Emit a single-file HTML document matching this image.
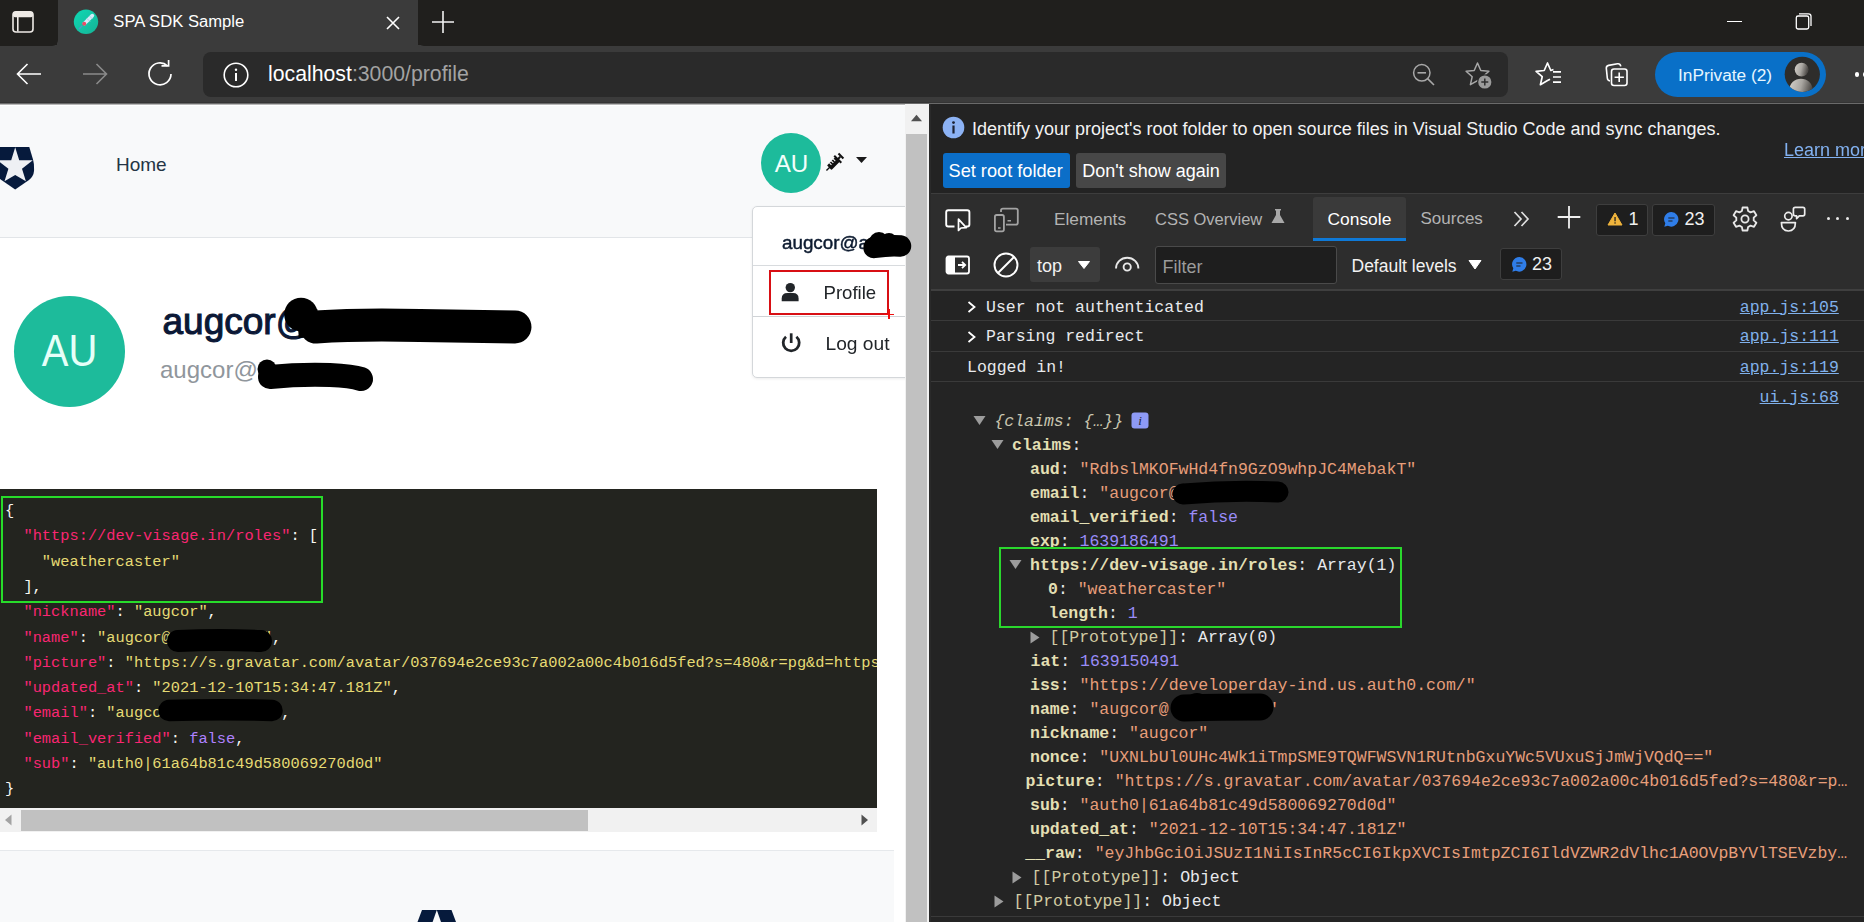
<!DOCTYPE html>
<html><head><meta charset="utf-8">
<style>
*{margin:0;padding:0;box-sizing:border-box}
html,body{width:1864px;height:922px;overflow:hidden;background:#fff;font-family:"Liberation Sans",sans-serif}
.a{position:absolute}
.mono{font-family:"Liberation Mono",monospace}
.k{color:#f92672}.s{color:#e6db74}.f{color:#ae81ff}
/* chrome */
#tabstrip{left:0;top:0;width:1864px;height:46px;background:#201f1d}
#tab{left:57px;top:0;width:361px;height:46px;background:#3b3b3b;border-radius:0 0 0 0}
#toolbar{left:0;top:45px;width:1864px;height:58px;background:#3b3b3b}
#sep{left:0;top:102px;width:1864px;height:1px;background:#343434}
#addr{left:203px;top:52px;width:1305px;height:45px;background:#2a2a2a;border-radius:8px}
/* page */
#page{left:0;top:104px;width:905px;height:818px;background:#fff;overflow:hidden}
#vscroll{left:905px;top:104px;width:24px;height:818px;background:#f1f1f1}
#divider{left:929px;top:104px;width:2px;height:818px;background:#494949}
/* devtools */
#dt{left:931px;top:104px;width:933px;height:818px;background:#242424;overflow:hidden}
</style></head>
<body>

<div id="tabstrip" class="a"></div>
<div id="toolbar" class="a"></div>
<!-- tab with rounded cutouts -->
<div class="a" style="left:57px;top:0;width:361px;height:46px;background:#3b3b3b"></div>
<div class="a" style="left:0;top:0;width:58px;height:46px;background:#201f1d;border-radius:0 0 6px 0"></div>
<div class="a" style="left:418px;top:0;width:1446px;height:46px;background:#201f1d;border-radius:0 0 0 6px"></div>
<!-- tab actions icon -->
<svg class="a" style="left:10px;top:9px" width="26" height="26" viewBox="0 0 26 26">
<rect x="3" y="2.8" width="20" height="20.2" rx="3" fill="none" stroke="#eeeae6" stroke-width="1.6"/>
<rect x="3" y="2.8" width="20" height="5.5" rx="2" fill="#eeeae6"/>
<line x1="7.8" y1="8" x2="7.8" y2="22.5" stroke="#eeeae6" stroke-width="1.6"/>
</svg>
<!-- favicon -->
<svg class="a" style="left:73px;top:9px" width="26" height="26" viewBox="0 0 26 26">
<defs><linearGradient id="fvg" x1="0" y1="0" x2="1" y2="1"><stop offset="0" stop-color="#0ed8b4"/><stop offset="1" stop-color="#16b396"/></linearGradient></defs>
<circle cx="13" cy="12.8" r="12.2" fill="url(#fvg)"/>
<path d="M11.5 14.5 L19.3 6.7" stroke="#d4ecf8" stroke-width="3.8" stroke-linecap="round"/>
<path d="M14 9.5 L17 12.5 M16.5 7 L19.5 10" stroke="#a9c8e6" stroke-width="0.9"/>
<circle cx="11.2" cy="14.8" r="2" fill="#ea4c68"/>
<path d="M5.8 20.2 L9.2 16.8" stroke="#4aa0c8" stroke-width="1.4"/>
</svg>
<div class="a" style="left:113.3px;top:10.1px;font-size:16.65px;color:#fff;line-height:24px">SPA SDK Sample</div>
<!-- close x -->
<svg class="a" style="left:383px;top:13px" width="20" height="20" viewBox="0 0 20 20">
<path d="M4 4 L16 16 M16 4 L4 16" stroke="#fff" stroke-width="1.6"/>
</svg>
<!-- new tab + -->
<svg class="a" style="left:430px;top:9px" width="26" height="26" viewBox="0 0 26 26">
<path d="M13 2 V24 M2 13 H24" stroke="#f2f2f2" stroke-width="1.6"/>
</svg>
<!-- window controls -->
<div class="a" style="left:1727px;top:21px;width:15px;height:1.4px;background:#fff"></div>
<svg class="a" style="left:1793px;top:11px" width="22" height="22" viewBox="0 0 22 22">
<rect x="3.3" y="5" width="12.4" height="13" rx="1.8" fill="none" stroke="#fff" stroke-width="1.3"/>
<path d="M6 2.8 H15.5 Q18 2.8 18 5.3 V15" fill="none" stroke="#fff" stroke-width="1.3"/>
</svg>
<!-- back -->
<svg class="a" style="left:14px;top:61px" width="30" height="26" viewBox="0 0 30 26">
<path d="M27 13 H4 M13.5 3 L3.5 13 L13.5 23" fill="none" stroke="#fff" stroke-width="1.6"/>
</svg>
<!-- forward -->
<svg class="a" style="left:80px;top:61px" width="30" height="26" viewBox="0 0 30 26">
<path d="M3 13 H26 M16.5 3 L26.5 13 L16.5 23" fill="none" stroke="#8a8a8a" stroke-width="1.6"/>
</svg>
<!-- refresh -->
<svg class="a" style="left:146px;top:60px" width="30" height="28" viewBox="0 0 30 28">
<path d="M25 14 A11 11 0 1 1 21.5 5.8" fill="none" stroke="#fff" stroke-width="1.7"/>
<path d="M15.5 5.8 H22.6 V0" fill="none" stroke="#fff" stroke-width="1.7"/>
</svg>
<div id="addr" class="a"></div>
<!-- info icon -->
<svg class="a" style="left:222px;top:61px" width="28" height="28" viewBox="0 0 28 28">
<circle cx="14" cy="14" r="11.8" fill="none" stroke="#fff" stroke-width="1.6"/>
<rect x="13" y="12" width="2" height="8" fill="#fff"/><circle cx="14" cy="8.7" r="1.2" fill="#fff"/>
</svg>
<div class="a" style="left:268px;top:60.7px;font-size:21.25px;line-height:26px;color:#fff;white-space:nowrap">localhost<span style="color:#a3a3a3">:3000/profile</span></div>
<!-- zoom out -->
<svg class="a" style="left:1410px;top:61px" width="28" height="28" viewBox="0 0 28 28">
<circle cx="11.8" cy="11.8" r="8.2" fill="none" stroke="#a8a8a8" stroke-width="1.5"/>
<path d="M7.5 11.8 H16" stroke="#a8a8a8" stroke-width="1.6"/>
<path d="M17.6 17.6 L24 24" stroke="#a8a8a8" stroke-width="1.6"/>
</svg>
<!-- star add -->
<svg class="a" style="left:1463px;top:59px" width="32" height="32" viewBox="0 0 32 32">
<path d="M14.5 4 L17.8 11.5 L25.9 12.3 L19.8 17.7 L21.6 25.7 L14.5 21.6 L7.4 25.7 L9.2 17.7 L3.1 12.3 L11.2 11.5 Z" fill="none" stroke="#a8a8a8" stroke-width="1.5" stroke-linejoin="round"/>
<circle cx="21.8" cy="23" r="7.8" fill="#2a2a2a"/>
<circle cx="21.8" cy="23" r="6.6" fill="#9b9b9b"/>
<path d="M21.8 19.5 V26.5 M18.3 23 H25.3" stroke="#2f2f2f" stroke-width="1.5"/>
</svg>
<!-- favorites -->
<svg class="a" style="left:1534px;top:59px" width="32" height="32" viewBox="0 0 32 32">
<path d="M19.5 10.5 L16.8 11.5 L13.5 4 L10.2 11.5 L2.1 12.3 L8.2 17.7 L6.4 25.7 L13.5 21.6 L16 20.2" fill="none" stroke="#fff" stroke-width="1.7" stroke-linejoin="round"/>
<path d="M19 12.8 H27 M19 18 H27 M19 23.2 H27" stroke="#fff" stroke-width="1.7"/>
</svg>
<!-- collections -->
<svg class="a" style="left:1603px;top:60px" width="32" height="32" viewBox="0 0 32 32">
<path d="M7 21 Q4.5 20.5 4.3 18 L3.3 8.2 Q3.2 5.8 5.6 5.4 L14.5 3.8 Q17.2 3.4 17.8 6.3" fill="none" stroke="#fff" stroke-width="1.6"/>
<rect x="8.5" y="9" width="15.5" height="16.5" rx="2.5" fill="none" stroke="#fff" stroke-width="1.6"/>
<path d="M16.2 12.5 V22 M11.6 17.2 H20.9" stroke="#fff" stroke-width="1.6"/>
</svg>
<!-- inprivate pill -->
<div class="a" style="left:1655px;top:52px;width:171px;height:45px;border-radius:23px;background:#0970c8"></div>
<div class="a" style="left:1678px;top:63.2px;font-size:17.3px;line-height:24px;color:#e6f6ff;white-space:nowrap">InPrivate (2)</div>
<svg class="a" style="left:1784px;top:56px" width="37" height="37" viewBox="0 0 37 37">
<defs><clipPath id="avc"><circle cx="18.3" cy="18.3" r="17.6"/></clipPath>
<linearGradient id="avg" x1="0" y1="0" x2="1" y2="0.25"><stop offset="0" stop-color="#d6d2cc"/><stop offset="0.55" stop-color="#a9a6a1"/><stop offset="1" stop-color="#4e4b48"/></linearGradient></defs>
<circle cx="18.3" cy="18.3" r="17.6" fill="#2e2d2b"/>
<g clip-path="url(#avc)"><circle cx="17.6" cy="13.6" r="6.9" fill="url(#avg)"/><ellipse cx="17" cy="33.5" rx="11.5" ry="10.8" fill="url(#avg)"/></g>
</svg>
<div class="a" style="left:1854.8px;top:72.3px;width:4.4px;height:4.4px;border-radius:50%;background:#fff"></div><div class="a" style="left:1862.8px;top:72.3px;width:4.4px;height:4.4px;border-radius:50%;background:#fff"></div>
<div id="sep" class="a"></div><div class="a" style="left:0;top:103px;width:1864px;height:1px;background:#6a6a6a"></div>

<div id="page" class="a">
<!-- navbar -->
<div class="a" style="left:0;top:0;width:905px;height:1px;background:#b8b8b8"></div><div class="a" style="left:0;top:2px;width:905px;height:132px;background:#f8f9fa;border-bottom:1px solid #e2e5e8"></div>
<svg class="a" style="left:-10px;top:40px" width="50" height="50" viewBox="-10 144 50 50">
<path d="M-4 146.9 H29.3 L33 159.5 Q34.3 164 34 171 Q33.5 176.5 29 180 L15.2 189.6 L1.4 180 Q-3.1 176.5 -3.6 171 Z" fill="#061a3c"/>
<path d="M15.2 147.2 L19.2 160.3 L32.8 160.3 L22 168.8 L25.9 181.3 L15.2 175.1 L4.5 181.3 L8.4 168.8 L-2.4 160.3 L11.2 160.3 Z" fill="#eef0f4"/>
</svg>
<div class="a" style="left:116px;top:49px;font-size:19px;line-height:24px;color:#243444">Home</div>
<!-- small avatar -->
<div class="a" style="left:760.5px;top:29px;width:60px;height:60px;border-radius:50%;background:#1dbb9b"></div>
<div class="a" style="left:774.5px;top:47.2px;width:34px;font-size:24.2px;line-height:26px;color:#f2fffb;text-align:center">AU</div>
<!-- syringe -->
<svg class="a" style="left:822px;top:147px;position:fixed" width="28" height="28" viewBox="0 0 28 28">
<g transform="rotate(-45 14 14)" fill="#111">
<rect x="0.5" y="13.3" width="5" height="1.4"/>
<path d="M4.5 11.3 Q4.5 10.8 5.5 10.8 H16 V17.2 H5.5 Q4.5 17.2 4.5 16.7 Z"/>
<rect x="16" y="13" width="4" height="2"/>
<rect x="15.5" y="9" width="2" height="10"/>
<rect x="20" y="10.5" width="2" height="7"/>
<rect x="7.5" y="10.5" width="1.1" height="3" fill="#f8f9fa"/><rect x="10.2" y="10.5" width="1.1" height="3" fill="#f8f9fa"/><rect x="12.9" y="10.5" width="1.1" height="3" fill="#f8f9fa"/>
</g></svg>
<svg class="a" style="left:855px;top:52px" width="13" height="8" viewBox="0 0 13 8"><path d="M1 1 H12 L6.5 7 Z" fill="#1a1a1a"/></svg>
<!-- profile header -->
<div class="a" style="left:14px;top:191.5px;width:111px;height:111px;border-radius:50%;background:#1dbb9b"></div>
<div class="a" style="left:14px;top:223.8px;width:111px;text-align:center;font-size:43.5px;line-height:46px;color:#e6fff8;transform:scaleX(0.92)">AU</div>
<div class="a" style="left:162.5px;top:195.5px;font-size:37px;line-height:44px;color:#0b1836;-webkit-text-stroke:1.1px #0b1836;white-space:nowrap">augcor@</div>
<div class="a" style="left:160px;top:251px;font-size:24px;line-height:30px;color:#90969c;white-space:nowrap">augcor@a</div>
<!-- scribbles -->
<svg class="a" style="left:240px;top:170px;position:fixed" width="320" height="240" viewBox="240 170 320 240">
<path d="M316 327 Q360 324 420 325.5 Q480 326.5 515 327" fill="none" stroke="#000" stroke-width="33" stroke-linecap="round"/>
<circle cx="301" cy="314.5" r="16.8" fill="#000"/>
<path d="M298 324 L318 323" stroke="#000" stroke-width="28"/>
<path d="M270 377 Q300 374 330 375 Q352 376 361 379" fill="none" stroke="#000" stroke-width="24" stroke-linecap="round"/>
<circle cx="267" cy="369" r="9.5" fill="#000"/>
</svg>
<!-- dropdown -->
<div class="a" style="left:752px;top:101.5px;width:170px;height:172px;background:#fff;border:1px solid #d4d7da;border-radius:5px;box-shadow:0 1px 3px rgba(0,0,0,0.08)"></div>
<div class="a" style="left:782px;top:127px;font-size:18.8px;line-height:24px;color:#0d1b30;-webkit-text-stroke:0.45px #0d1b30;white-space:nowrap">augcor@a</div>

<div class="a" style="left:753px;top:160.5px;width:152px;height:1px;background:#d8dbde"></div>
<div class="a" style="left:753px;top:211.5px;width:152px;height:1px;background:#d0d3d6"></div>
<svg class="a" style="left:780px;top:281px;position:fixed" width="20" height="22" viewBox="0 0 20 22">
<circle cx="10.3" cy="6.6" r="4.7" fill="#212529"/>
<path d="M1.7 20.3 V17.5 Q1.7 12 7.5 12 H13 Q18.6 12 18.6 17.5 V20.3 Z" fill="#212529"/>
</svg>
<div class="a" style="left:823.5px;top:176.5px;font-size:18.6px;line-height:24px;color:#212529">Profile</div>
<svg class="a" style="left:780px;top:331px;position:fixed" width="22" height="22" viewBox="0 0 22 22">
<path d="M6 5.8 A8 8 0 1 0 16.4 5.8" fill="none" stroke="#212529" stroke-width="2.8"/>
<path d="M11.2 2.3 V12" stroke="#212529" stroke-width="2.7"/>
</svg>
<div class="a" style="left:825.5px;top:227.5px;font-size:19.2px;line-height:24px;color:#212529">Log out</div>
<div class="a" style="left:768.5px;top:166px;width:120px;height:44.5px;border:2px solid #d80f14"></div>
<div class="a" style="left:884px;top:209.5px;width:10px;height:1.6px;background:#f01010"></div>
<div class="a" style="left:888.2px;top:205px;width:1.6px;height:10px;background:#f01010"></div>
<!-- page vscroll -->
<!-- code block -->
<div class="a" style="left:0;top:384.5px;width:877px;height:319.2px;background:#23241f"></div>
<pre class="a mono" style="left:5px;top:395.2px;font-size:15.35px;line-height:25.27px;color:#f8f8f2;white-space:pre">{
  <span class="k">"https://dev-visage.in/roles"</span>: [
    <span class="s">"weathercaster"</span>
  ],
  <span class="k">"nickname"</span>: <span class="s">"augcor"</span>,
  <span class="k">"name"</span>: <span class="s">"augcor@          "</span>,
  <span class="k">"picture"</span>: <span class="s">"https://s.gravatar.com/avatar/037694e2ce93c7a002a00c4b016d5fed?s=480&amp;r=pg&amp;d=https%3A%2F%2Fcdn"</span>,
  <span class="k">"updated_at"</span>: <span class="s">"2021-12-10T15:34:47.181Z"</span>,
  <span class="k">"email"</span>: <span class="s">"augcor@          "</span>,
  <span class="k">"email_verified"</span>: <span class="f">false</span>,
  <span class="k">"sub"</span>: <span class="s">"auth0|61a64b81c49d580069270d0d"</span>
}</pre>
<div class="a" style="left:877px;top:384.5px;width:28px;height:450px;background:#fff"></div>
<!-- green box -->
<div class="a" style="left:0.5px;top:392px;width:322.5px;height:106.5px;border:2.3px solid #27dc2a"></div>
<svg class="a" style="left:150px;top:515px" width="150" height="110" viewBox="150 619 150 110"><path d="M178 641 Q220 639 261 641" fill="none" stroke="#000" stroke-width="22" stroke-linecap="round"/><path d="M169 710.5 Q220 709 272 710.5" fill="none" stroke="#000" stroke-width="21.5" stroke-linecap="round"/></svg>
<!-- h scrollbar -->
<div class="a" style="left:0;top:704px;width:877px;height:24px;background:#f1f1f1"></div>
<div class="a" style="left:21px;top:705.5px;width:567px;height:21px;background:#c1c1c1"></div>
<svg class="a" style="left:4px;top:710px" width="8" height="12" viewBox="0 0 8 12"><path d="M7.5 0.5 V11.5 L1 6 Z" fill="#a3a3a3"/></svg>
<svg class="a" style="left:861px;top:710px" width="8" height="12" viewBox="0 0 8 12"><path d="M0.5 0.5 V11.5 L7 6 Z" fill="#505050"/></svg>
<!-- footer -->
<div class="a" style="left:0;top:745.5px;width:894px;height:100px;background:#f8f9fa;border-top:1.5px solid #e6e9ec"></div>
<svg class="a" style="left:400px;top:804px" width="70" height="20" viewBox="400 908 70 20"><path d="M422 910 H451.5 L456 922 H417.5 Z" fill="#061a3c"/><path d="M436.8 910 L441 922 H432.6 Z" fill="#f8f9fa"/></svg>
</div>

<div id="vscroll" class="a"></div>
<svg class="a" style="left:910px;top:114px" width="13" height="8" viewBox="0 0 13 8"><path d="M1 7.3 L6.5 0.8 L12 7.3 Z" fill="#505050"/></svg>
<div class="a" style="left:906px;top:134px;width:21px;height:788px;background:#c1c1c1"></div>
<svg class="a" style="left:850px;top:220px;position:fixed" width="70" height="50" viewBox="850 220 70 50">
<path d="M874 247.5 Q890 245 900.5 246" fill="none" stroke="#000" stroke-width="21.5" stroke-linecap="round"/><circle cx="879" cy="242" r="10" fill="#000"/><circle cx="889" cy="241" r="8" fill="#000"/>
</svg>
<!--DT-->
<div class="a" style="left:930px;top:104px;width:934px;height:818px;background:#242424"></div>
<div class="a" style="left:929px;top:104px;width:1.5px;height:818px;background:#2a2a2a"></div>
<div class="a" style="left:930.5px;top:104px;width:934px;height:89px;background:#232323"></div>
<div class="a" style="left:930.5px;top:193px;width:934px;height:96px;background:#2d2d2d;border-top:1.5px solid #3d3d3d"></div>
<div class="a" style="left:930.5px;top:289px;width:934px;height:1.5px;background:#3f3f3f"></div>
<svg class="a" style="left:942px;top:116px" width="23" height="23" viewBox="0 0 23 23"><circle cx="11.5" cy="11.5" r="10.8" fill="#8cb2f4"/><rect x="10.4" y="9.5" width="2.2" height="8" fill="#1d2233"/><circle cx="11.5" cy="6.6" r="1.4" fill="#1d2233"/></svg>
<div class="a" style="left:972px;top:116.96px;font-size:18px;line-height:24px;color:#f2f2f2;white-space:nowrap">Identify your project's root folder to open source files in Visual Studio Code and sync changes.</div>
<div class="a" style="left:1784px;top:137.56px;font-size:18px;line-height:24px;color:#82b1f0;white-space:nowrap;text-decoration:underline">Learn more</div>
<div class="a" style="left:943px;top:152.5px;width:127px;height:35.5px;background:#0b6ec8;border-radius:3px"></div>
<div class="a" style="left:948.5px;top:158.69px;font-size:18.2px;line-height:24px;color:#fff;white-space:nowrap">Set root folder</div>
<div class="a" style="left:1076.3px;top:152.5px;width:149.5px;height:35.5px;background:#474747;border-radius:3px"></div>
<div class="a" style="left:1082.3px;top:158.76px;font-size:18px;line-height:24px;color:#fff;white-space:nowrap">Don't show again</div>
<svg class="a" style="left:944px;top:207px" width="28" height="26" viewBox="0 0 28 26">
<path d="M10.5 19.5 H4.3 Q2.2 19.5 2.2 17.4 V5.3 Q2.2 3.2 4.3 3.2 H23.3 Q25.4 3.2 25.4 5.3 V17.4 Q25.4 19.5 23.3 19.5 H22" fill="none" stroke="#fff" stroke-width="1.9"/>
<path d="M14.5 12.2 V23.5 L17 21 L22.3 20.6 Z" fill="#2c2c2c" stroke="#fff" stroke-width="1.7" stroke-linejoin="round"/>
</svg>
<svg class="a" style="left:992px;top:206px" width="28" height="28" viewBox="0 0 28 28">
<path d="M9 6 V4.6 Q9 2.7 10.9 2.7 H23.9 Q25.8 2.7 25.8 4.6 V16.7 Q25.8 18.6 23.9 18.6 H14" fill="none" stroke="#a3a3a3" stroke-width="1.8"/>
<rect x="2.9" y="9" width="9" height="16.3" rx="1.8" fill="none" stroke="#a3a3a3" stroke-width="1.8"/>
<path d="M6 22 H8.6 M15.5 14.8 H19" stroke="#a3a3a3" stroke-width="1.5"/>
</svg>
<div class="a" style="left:1313px;top:197px;width:93px;height:43px;background:#3a3a3a;border-radius:3px 3px 0 0"></div>
<div class="a" style="left:1313px;top:238px;width:93px;height:2.5px;background:#0f7ad8"></div>
<div class="a" style="left:1054px;top:207.01px;font-size:17.3px;line-height:24px;color:#b3b3b3;white-space:nowrap">Elements</div>
<div class="a" style="left:1155px;top:207.28px;font-size:16.5px;line-height:24px;color:#b3b3b3;white-space:nowrap">CSS Overview</div>
<svg class="a" style="left:1270px;top:208px" width="16" height="16" viewBox="0 0 16 16"><path d="M5 1 H11 V2.5 H10 V7 L14.5 15 H1.5 L6 7 V2.5 H5 Z" fill="#a8a8a8"/></svg>
<div class="a" style="left:1327.5px;top:206.97px;font-size:17.4px;line-height:24px;color:#ffffff;white-space:nowrap">Console</div>
<div class="a" style="left:1420.5px;top:207.11px;font-size:17px;line-height:24px;color:#b3b3b3;white-space:nowrap">Sources</div>
<svg class="a" style="left:1511px;top:209px" width="22" height="20" viewBox="0 0 22 20"><path d="M3.5 3 L10 10 L3.5 17 M10.5 3 L17 10 L10.5 17" fill="none" stroke="#e0e0e0" stroke-width="1.7"/></svg>
<svg class="a" style="left:1556px;top:204px" width="26" height="26" viewBox="0 0 26 26"><path d="M13 2 V24.5 M1.7 13 H24.3" stroke="#f0f0f0" stroke-width="1.8"/></svg>
<div class="a" style="left:1596.3px;top:203.5px;width:52px;height:32px;background:#1e1e1e;border:1px solid #3e3e3e;border-radius:3px"></div>
<svg class="a" style="left:1607px;top:212px" width="16" height="14" viewBox="0 0 16 14"><path d="M8 1 L15 13 H1 Z" fill="#f0b43c" stroke="#f0b43c" stroke-width="1" stroke-linejoin="round"/><rect x="7.4" y="5" width="1.3" height="4.3" fill="#1e1e1e"/><rect x="7.4" y="10.3" width="1.3" height="1.3" fill="#1e1e1e"/></svg>
<div class="a" style="left:1628.5px;top:207.26px;font-size:18px;line-height:24px;color:#f0f0f0;white-space:nowrap">1</div>
<div class="a" style="left:1652px;top:203.5px;width:62.5px;height:32px;background:#1e1e1e;border:1px solid #3e3e3e;border-radius:3px"></div>
<svg class="a" style="left:1663px;top:211px" width="17" height="17" viewBox="0 0 17 17"><path d="M8.5 1 A7.3 7.3 0 1 1 4.8 14.8 L1.3 15.8 L2.3 12.3 A7.3 7.3 0 0 1 8.5 1 Z" fill="#2f7de8"/><path d="M5.3 7 H11.5 M5.3 10 H9.5" stroke="#1e1e1e" stroke-width="1.2"/></svg>
<div class="a" style="left:1684.5px;top:207.26px;font-size:18px;line-height:24px;color:#f0f0f0;white-space:nowrap">23</div>
<svg class="a" style="left:1731px;top:205px" width="28" height="28" viewBox="0 0 28 28">
<path d="M11.6 2.5 H16.4 L17.1 6 L19.6 7.4 L23 6.2 L25.4 10.3 L22.7 12.6 V15.4 L25.4 17.7 L23 21.8 L19.6 20.6 L17.1 22 L16.4 25.5 H11.6 L10.9 22 L8.4 20.6 L5 21.8 L2.6 17.7 L5.3 15.4 V12.6 L2.6 10.3 L5 6.2 L8.4 7.4 L10.9 6 Z" fill="none" stroke="#e8e8e8" stroke-width="1.8" stroke-linejoin="round"/>
<circle cx="14" cy="14" r="3.6" fill="none" stroke="#e8e8e8" stroke-width="1.8"/></svg>
<svg class="a" style="left:1779px;top:205px" width="28" height="28" viewBox="0 0 28 28">
<circle cx="9.4" cy="11.1" r="3.7" fill="none" stroke="#ececec" stroke-width="1.7"/>
<path d="M2.4 17.6 H16.4 Q16.4 26 9.4 26 Q2.4 26 2.4 17.6 Z" fill="none" stroke="#ececec" stroke-width="1.7" stroke-linejoin="round"/>
<path d="M16.2 2.3 H23.9 Q25.7 2.3 25.7 4.1 V9.1 Q25.7 10.9 23.9 10.9 H20.3 L17.6 13.6 V10.9 H16.2 Q14.4 10.9 14.4 9.1 V4.1 Q14.4 2.3 16.2 2.3 Z" fill="none" stroke="#ececec" stroke-width="1.7" stroke-linejoin="round"/>
</svg>
<div class="a" style="left:1826.8px;top:217px;width:3.2px;height:3.2px;border-radius:50%;background:#e8e8e8"></div>
<div class="a" style="left:1836.2px;top:217px;width:3.2px;height:3.2px;border-radius:50%;background:#e8e8e8"></div>
<div class="a" style="left:1845.8px;top:217px;width:3.2px;height:3.2px;border-radius:50%;background:#e8e8e8"></div>
<svg class="a" style="left:944px;top:254px" width="28" height="22" viewBox="0 0 28 22">
<rect x="2.5" y="2.5" width="22.5" height="17" rx="2" fill="none" stroke="#fff" stroke-width="1.8"/>
<path d="M2.5 4.5 Q2.5 2.5 4.5 2.5 H11 V19.5 H4.5 Q2.5 19.5 2.5 17.5 Z" fill="#fff"/>
<path d="M14 11 H21 M18 7.8 L21.2 11 L18 14.2" fill="none" stroke="#fff" stroke-width="1.8"/>
</svg>
<svg class="a" style="left:992px;top:252px" width="28" height="28" viewBox="0 0 28 28"><circle cx="14" cy="13" r="11.5" fill="none" stroke="#fff" stroke-width="1.9"/><path d="M22 5 L6 21" stroke="#fff" stroke-width="1.9"/></svg>
<div class="a" style="left:1030.3px;top:247px;width:70px;height:35px;background:#3c3c3c;border-radius:3px"></div>
<div class="a" style="left:1037px;top:254.06px;font-size:18px;line-height:24px;color:#f2f2f2;white-space:nowrap">top</div>
<svg class="a" style="left:1077.3px;top:260px" width="14" height="10" viewBox="0 0 14 10"><path d="M1.5 1.5 H12.5 L7 8.5 Z" fill="#fff" stroke="#fff" stroke-width="1" stroke-linejoin="round"/></svg>
<svg class="a" style="left:1112px;top:252px" width="30" height="28" viewBox="0 0 30 28"><path d="M4 16.5 A11.2 10.8 0 0 1 26.4 16.5" fill="none" stroke="#e8e8e8" stroke-width="1.9"/><circle cx="15.2" cy="15" r="3.6" fill="none" stroke="#e8e8e8" stroke-width="1.9"/></svg>
<div class="a" style="left:1155px;top:246px;width:181.5px;height:37.5px;background:#1e1e1e;border:1px solid #4a4a4a;border-radius:3px"></div>
<div class="a" style="left:1162.5px;top:254.76px;font-size:18px;line-height:24px;color:#9b9b9b;white-space:nowrap">Filter</div>
<div class="a" style="left:1351.5px;top:253.74px;font-size:17.5px;line-height:24px;color:#f2f2f2;white-space:nowrap">Default levels</div>
<svg class="a" style="left:1467px;top:259px" width="16" height="12" viewBox="0 0 16 12"><path d="M2 1.5 H14 L8 10 Z" fill="#fff" stroke="#fff" stroke-width="1" stroke-linejoin="round"/></svg>
<div class="a" style="left:1499.5px;top:248.4px;width:62px;height:32px;background:#1e1e1e;border:1px solid #3e3e3e;border-radius:3px"></div>
<svg class="a" style="left:1510.5px;top:256px" width="17" height="17" viewBox="0 0 17 17"><path d="M8.5 1 A7.3 7.3 0 1 1 4.8 14.8 L1.3 15.8 L2.3 12.3 A7.3 7.3 0 0 1 8.5 1 Z" fill="#2f7de8"/><path d="M5.3 7 H11.5 M5.3 10 H9.5" stroke="#1e1e1e" stroke-width="1.2"/></svg>
<div class="a" style="left:1532px;top:252.26px;font-size:18px;line-height:24px;color:#f0f0f0;white-space:nowrap">23</div>
<div class="a" style="left:930.5px;top:319.6px;width:934px;height:1px;background:#3a3a3a"></div>
<div class="a" style="left:930.5px;top:351.1px;width:934px;height:1px;background:#3a3a3a"></div>
<div class="a" style="left:930.5px;top:380.8px;width:934px;height:1px;background:#3a3a3a"></div>
<svg class="a" style="left:965.5px;top:300.1px" width="12" height="14" viewBox="0 0 12 14"><path d="M2.5 2 L8.5 7 L2.5 12" fill="none" stroke="#fff" stroke-width="1.8"/></svg>
<div class="a mono" style="left:986px;top:295.7px;font-size:16.5px;line-height:24px;color:#e8eaed;white-space:pre;">User not authenticated</div>
<div class="a mono" style="right:25.200000000000045px;top:295.7px;font-size:16.5px;line-height:24px;color:#80b1ec;white-space:pre;text-decoration:underline">app.js:105</div>
<svg class="a" style="left:965.5px;top:329.8px" width="12" height="14" viewBox="0 0 12 14"><path d="M2.5 2 L8.5 7 L2.5 12" fill="none" stroke="#fff" stroke-width="1.8"/></svg>
<div class="a mono" style="left:986px;top:325.4px;font-size:16.5px;line-height:24px;color:#e8eaed;white-space:pre;">Parsing redirect</div>
<div class="a mono" style="right:25.200000000000045px;top:325.4px;font-size:16.5px;line-height:24px;color:#80b1ec;white-space:pre;text-decoration:underline">app.js:111</div>
<div class="a mono" style="left:967px;top:356.2px;font-size:16.5px;line-height:24px;color:#e8eaed;white-space:pre;">Logged in!</div>
<div class="a mono" style="right:25.200000000000045px;top:356.2px;font-size:16.5px;line-height:24px;color:#80b1ec;white-space:pre;text-decoration:underline">app.js:119</div>
<div class="a mono" style="right:25.200000000000045px;top:385.7px;font-size:16.5px;line-height:24px;color:#80b1ec;white-space:pre;text-decoration:underline">ui.js:68</div>
<svg class="a" style="left:973px;top:415.3px" width="13" height="11" viewBox="0 0 13 11"><path d="M0.5 1 H12.5 L6.5 10 Z" fill="#9c9c9c"/></svg>
<div class="a mono" style="left:994.4px;top:410.4px;font-size:16.5px;line-height:24px;color:#e8eaed;white-space:pre;"><i style="color:#c9c6b0">{claims: {…}}</i></div>
<svg class="a" style="left:1131px;top:412px" width="18" height="17" viewBox="0 0 18 17"><rect x="0.5" y="0.5" width="17" height="16" rx="3" fill="#8e9af6"/><text x="9" y="13.2" text-anchor="middle" font-family="Liberation Serif" font-style="italic" font-size="13" fill="#22263a">i</text></svg>
<svg class="a" style="left:990.7px;top:439.3px" width="13" height="11" viewBox="0 0 13 11"><path d="M0.5 1 H12.5 L6.5 10 Z" fill="#9c9c9c"/></svg>
<div class="a mono" style="left:1012px;top:434.4px;font-size:16.5px;line-height:24px;color:#e8eaed;white-space:pre;"><b style="color:#e3dfb3">claims</b><span style="color:#e8eaed">:</span></div>
<div class="a mono" style="left:1030px;top:458.4px;font-size:16.5px;line-height:24px;color:#e8eaed;white-space:pre;"><b style="color:#e3dfb3">aud</b><span style="color:#e8eaed">:</span> <span style="color:#e79e7a">"RdbslMKOFwHd4fn9GzO9whpJC4MebakT"</span></div>
<div class="a mono" style="left:1030px;top:482.4px;font-size:16.5px;line-height:24px;color:#e8eaed;white-space:pre;"><b style="color:#e3dfb3">email</b><span style="color:#e8eaed">:</span> <span style="color:#e79e7a">"augcor@</span></div>
<div class="a mono" style="left:1030px;top:506.4px;font-size:16.5px;line-height:24px;color:#e8eaed;white-space:pre;"><b style="color:#e3dfb3">email_verified</b><span style="color:#e8eaed">:</span> <span style="color:#9a8cf8">false</span></div>
<div class="a mono" style="left:1030px;top:530.4px;font-size:16.5px;line-height:24px;color:#e8eaed;white-space:pre;"><b style="color:#e3dfb3">exp</b><span style="color:#e8eaed">:</span> <span style="color:#9a8cf8">1639186491</span></div>
<div class="a mono" style="left:1030px;top:554.4px;font-size:16.5px;line-height:24px;color:#e8eaed;white-space:pre;"><b style="color:#e3dfb3">https://dev-visage.in/roles</b><span style="color:#e8eaed">:</span> <span style="color:#e8eaed">Array(1)</span></div>
<div class="a mono" style="left:1048px;top:578.4px;font-size:16.5px;line-height:24px;color:#e8eaed;white-space:pre;"><b style="color:#e3dfb3">0</b><span style="color:#e8eaed">:</span> <span style="color:#e79e7a">"weathercaster"</span></div>
<div class="a mono" style="left:1048.5px;top:602.4px;font-size:16.5px;line-height:24px;color:#e8eaed;white-space:pre;"><b style="color:#e3dfb3">length</b><span style="color:#e8eaed">:</span> <span style="color:#9a8cf8">1</span></div>
<div class="a mono" style="left:1049.5px;top:626.4px;font-size:16.5px;line-height:24px;color:#e8eaed;white-space:pre;"><span style="color:#e3dfb3;opacity:0.9">[[Prototype]]</span><span style="color:#e8eaed">:</span> <span style="color:#e8eaed">Array(0)</span></div>
<div class="a mono" style="left:1030.5px;top:650.4px;font-size:16.5px;line-height:24px;color:#e8eaed;white-space:pre;"><b style="color:#e3dfb3">iat</b><span style="color:#e8eaed">:</span> <span style="color:#9a8cf8">1639150491</span></div>
<div class="a mono" style="left:1030px;top:674.4px;font-size:16.5px;line-height:24px;color:#e8eaed;white-space:pre;"><b style="color:#e3dfb3">iss</b><span style="color:#e8eaed">:</span> <span style="color:#e79e7a">"https://developerday-ind.us.auth0.com/"</span></div>
<div class="a mono" style="left:1030px;top:698.4px;font-size:16.5px;line-height:24px;color:#e8eaed;white-space:pre;"><b style="color:#e3dfb3">name</b><span style="color:#e8eaed">:</span> <span style="color:#e79e7a">"augcor@          "</span></div>
<div class="a mono" style="left:1030px;top:722.4px;font-size:16.5px;line-height:24px;color:#e8eaed;white-space:pre;"><b style="color:#e3dfb3">nickname</b><span style="color:#e8eaed">:</span> <span style="color:#e79e7a">"augcor"</span></div>
<div class="a mono" style="left:1030px;top:746.4px;font-size:16.5px;line-height:24px;color:#e8eaed;white-space:pre;"><b style="color:#e3dfb3">nonce</b><span style="color:#e8eaed">:</span> <span style="color:#e79e7a">"UXNLbUl0UHc4Wk1iTmpSME9TQWFWSVN1RUtnbGxuYWc5VUxuSjJmWjVQdQ=="</span></div>
<div class="a mono" style="left:1025.5px;top:770.4px;font-size:16.5px;line-height:24px;color:#e8eaed;white-space:pre;"><b style="color:#e3dfb3">picture</b><span style="color:#e8eaed">:</span> <span style="color:#e79e7a">"https://s.gravatar.com/avatar/037694e2ce93c7a002a00c4b016d5fed?s=480&amp;r=p…</span></div>
<div class="a mono" style="left:1030px;top:794.4px;font-size:16.5px;line-height:24px;color:#e8eaed;white-space:pre;"><b style="color:#e3dfb3">sub</b><span style="color:#e8eaed">:</span> <span style="color:#e79e7a">"auth0|61a64b81c49d580069270d0d"</span></div>
<div class="a mono" style="left:1030px;top:818.4px;font-size:16.5px;line-height:24px;color:#e8eaed;white-space:pre;"><b style="color:#e3dfb3">updated_at</b><span style="color:#e8eaed">:</span> <span style="color:#e79e7a">"2021-12-10T15:34:47.181Z"</span></div>
<div class="a mono" style="left:1025.3px;top:842.4px;font-size:16.5px;line-height:24px;color:#e8eaed;white-space:pre;"><b style="color:#e3dfb3">__raw</b><span style="color:#e8eaed">:</span> <span style="color:#e79e7a">"eyJhbGciOiJSUzI1NiIsInR5cCI6IkpXVCIsImtpZCI6IldVZWR2dVlhc1A0OVpBYVlTSEVzby…</span></div>
<div class="a mono" style="left:1031.6px;top:866.4px;font-size:16.5px;line-height:24px;color:#e8eaed;white-space:pre;"><span style="color:#e3dfb3;opacity:0.9">[[Prototype]]</span><span style="color:#e8eaed">:</span> <span style="color:#e8eaed">Object</span></div>
<div class="a mono" style="left:1013.5px;top:890.4px;font-size:16.5px;line-height:24px;color:#e8eaed;white-space:pre;"><span style="color:#e3dfb3;opacity:0.9">[[Prototype]]</span><span style="color:#e8eaed">:</span> <span style="color:#e8eaed">Object</span></div>
<svg class="a" style="left:1008.8px;top:559.3px" width="13" height="11" viewBox="0 0 13 11"><path d="M0.5 1 H12.5 L6.5 10 Z" fill="#9c9c9c"/></svg>
<svg class="a" style="left:1030.3px;top:630.8px" width="10" height="13" viewBox="0 0 10 13"><path d="M0.5 0.5 V12.5 L9.5 6.5 Z" fill="#9c9c9c"/></svg>
<svg class="a" style="left:1011.8px;top:870.8px" width="10" height="13" viewBox="0 0 10 13"><path d="M0.5 0.5 V12.5 L9.5 6.5 Z" fill="#9c9c9c"/></svg>
<svg class="a" style="left:994px;top:894.8px" width="10" height="13" viewBox="0 0 10 13"><path d="M0.5 0.5 V12.5 L9.5 6.5 Z" fill="#9c9c9c"/></svg>
<svg class="a" style="left:1160px;top:470px" width="140" height="260" viewBox="1160 470 140 260"><path d="M1183 494 Q1230 490 1278 492" fill="none" stroke="#000" stroke-width="21" stroke-linecap="round"/><path d="M1184 708 Q1220 707 1260 707" fill="none" stroke="#000" stroke-width="27" stroke-linecap="round"/><circle cx="1197" cy="706" r="13" fill="#000"/></svg>
<div class="a" style="left:999px;top:547.3px;width:402.6px;height:80.3px;border:2.2px solid #2ad72d"></div>
<div class="a" style="left:930.5px;top:916px;width:934px;height:1px;background:#3a3a3a"></div>
<!--/DT-->
<!--OVER-->
<!--/OVER-->
</body></html>
